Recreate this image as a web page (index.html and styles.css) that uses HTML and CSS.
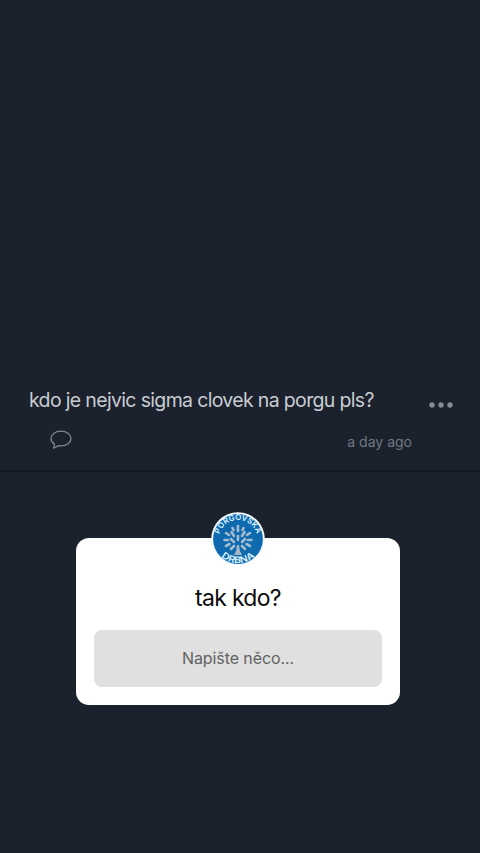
FILE: index.html
```
<!DOCTYPE html>
<html lang="cs">
<head>
<meta charset="utf-8">
<title>Otázka</title>
<link rel="stylesheet" href="styles.css">
</head>
<body>
<main class="story">
  <article class="post">
    <div class="post-main">
      <p class="post-text">kdo je nejvic sigma clovek na porgu pls?</p>
      <svg class="more" width="26" height="8" viewBox="0 0 26 8"><circle cx="4" cy="4" r="2.7"/><circle cx="13" cy="4" r="2.7"/><circle cx="22" cy="4" r="2.7"/></svg>
    </div>
    <div class="post-meta">
      <svg class="comment" width="24" height="22" viewBox="0 0 24 22"><path d="M5.4 15.1C3.2 13.8 2 11.8 2 9.6C2 5.4 6.4 2.2 12 2.2S22 5.4 22 9.6S17.6 16.9 12 16.9C11 16.9 10 16.8 9.1 16.6C7.8 18 6.2 18.8 4.4 19C5.3 17.8 5.6 16.4 5.4 15.1Z"/></svg>
      <time class="time">a day ago</time>
    </div>
  </article>
  <section class="question">
    <svg class="avatar" width="54" height="56" viewBox="1 0 54 56">
      <defs>
        <path id="arc-top" d="M8.9 28A19.1 19.1 0 0 1 47.1 28"/>
        <path id="arc-bottom" d="M3.8 28A24.2 24.2 0 0 0 52.2 28"/>
      </defs>
      <circle cx="28" cy="28" r="26.8" fill="#f3faff"/>
      <circle cx="28" cy="28" r="24.9" fill="#0e69ae"/>
      <g class="leaves">
        <path d="M28 29V25M28 20V15M24 31L21 28M32 31L35 28M24 25L21.5 21M32 25L34.5 21M19 24L16 22M37 24L40 22M18 29H14.5M38 29H41.5M19.5 33L16 35M36.5 33L40 35M24 35L21 38M32 35L35 38M23.5 19L22.5 17M32.5 19L33.5 17"/>
      </g>
      <path class="trunk" d="M27 34H29L30 40L32 44H24L26 40Z"/>
      <text class="badge-text"><textPath href="#arc-top" startOffset="50%" textLength="50" lengthAdjust="spacingAndGlyphs">PORGOVSKA</textPath></text>
      <text class="badge-text badge-bottom"><textPath href="#arc-bottom" startOffset="50%" textLength="37" lengthAdjust="spacingAndGlyphs">DRBNA</textPath></text>
    </svg>
    <h1 class="title">tak kdo?</h1>
    <div class="answer">Napište něco...</div>
  </section>
</main>
</body>
</html>
```
FILE: styles.css
```
* { box-sizing: border-box; }
body {
  margin: 0;
  background: #1b222d;
  font-family: Inter, "Liberation Sans", sans-serif;
}
.story {
  min-height: 853px;
  padding-top: 384px;
}
.post {
  height: 88px;
  border-bottom: 2px solid #111722;
}
.post-main {
  display: flex;
  justify-content: space-between;
  padding: 0 26px 0 29px;
}
.post-text {
  margin: 0;
  color: #c9ccd1;
  font-size: 19.5px;
  line-height: 32px;
  letter-spacing: -0.66px;
  white-space: nowrap;
}
.more {
  margin-top: 17px;
  fill: #858991;
}
.post-meta {
  display: flex;
  justify-content: space-between;
  padding: 0 68px 0 49px;
}
.comment {
  margin-top: 13px;
  fill: none;
  stroke: #80858f;
  stroke-width: 1.3;
  stroke-linejoin: round;
}
.time {
  margin-top: 16px;
  color: #737882;
  font-size: 14px;
  line-height: 20px;
}
.question {
  display: flex;
  flex-direction: column;
  align-items: center;
  width: 324px;
  height: 167px;
  margin: 66px 0 0 76px;
  padding: 0 18px 18px;
  border-radius: 13px;
  background: #fff;
}
.avatar {
  flex: none;
  margin-top: -27px;
}
.leaves {
  fill: none;
  stroke: #a3bcd0;
  stroke-width: 2.6;
  stroke-linecap: round;
}
.trunk { fill: #a3b4c4; }
.badge-text {
  fill: #d9f3ff;
  font-size: 8px;
  font-weight: 600;
  text-anchor: middle;
}
.badge-bottom { font-size: 9px; }
.title {
  margin: 15px 0 0;
  color: #0b0b0c;
  font-size: 23px;
  font-weight: 400;
  line-height: 32px;
  letter-spacing: -0.7px;
}
.answer {
  width: 288px;
  height: 57px;
  margin-top: 16px;
  border-radius: 8px;
  background: #e0e0e0;
  color: #626262;
  font-size: 16px;
  line-height: 57px;
  letter-spacing: -0.1px;
  text-align: center;
}
```
